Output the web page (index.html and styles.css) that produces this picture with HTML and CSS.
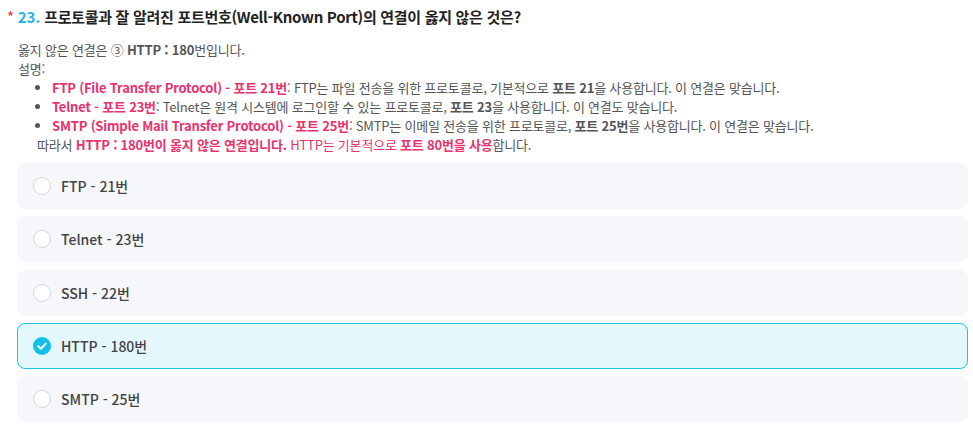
FILE: index.html
```html
<!DOCTYPE html>
<html lang="ko">
<head>
<meta charset="utf-8">
<link rel="stylesheet" href="styles.css">
</head>
<body>
<div class="page">
  <h2 class="title"><span class="req">*</span><span class="num">23.</span> 프로토콜과 잘 알려진 포트번호(Well-Known Port)의 연결이 옳지 않은 것은?</h2>
  <div class="explain">
    <p>옳지 않은 연결은 ③ <b>HTTP : 180</b>번입니다.</p>
    <p>설명:</p>
    <ul>
      <li><b class="pk">FTP (File Transfer Protocol) - 포트 21번</b>: FTP는 파일 전송을 위한 프로토콜로, 기본적으로 <b>포트 21</b>을 사용합니다. 이 연결은 맞습니다.</li>
      <li><b class="pk">Telnet - 포트 23번</b>: Telnet은 원격 시스템에 로그인할 수 있는 프로토콜로, <b>포트 23</b>을 사용합니다. 이 연결도 맞습니다.</li>
      <li><b class="pk">SMTP (Simple Mail Transfer Protocol) - 포트 25번</b>: SMTP는 이메일 전송을 위한 프로토콜로, <b>포트 25번</b>을 사용합니다. 이 연결은 맞습니다.</li>
    </ul>
    <p class="sum">따라서 <b class="pk">HTTP : 180번이 옳지 않은 연결입니다.</b><span class="pk"> HTTP는 기본적으로 </span><b class="pk">포트 80번을 사용</b>합니다.</p>
  </div>
  <div class="options">
    <div class="opt"><span class="radio"></span><span class="label">FTP - 21번</span></div>
    <div class="opt"><span class="radio"></span><span class="label">Telnet - 23번</span></div>
    <div class="opt"><span class="radio"></span><span class="label">SSH - 22번</span></div>
    <div class="opt sel"><span class="radio on"><svg width="18" height="18" viewBox="0 0 18 18"><circle cx="9" cy="9" r="9" fill="#12c0ea"/><path d="M5.2 9.2 L7.8 11.7 L12.8 6.6" fill="none" stroke="#fff" stroke-width="2" stroke-linecap="round" stroke-linejoin="round"/></svg></span><span class="label">HTTP - 180번</span></div>
    <div class="opt"><span class="radio"></span><span class="label">SMTP - 25번</span></div>
  </div>
</div>
</body>
</html>
```
FILE: styles.css
```css
* { box-sizing: border-box; }
html, body { margin: 0; padding: 0; background: #fff; }
body { font-family: "Noto Sans CJK KR", "Noto Sans", sans-serif; color: #555; }
.page { padding: 6px 5px 0 7px; }
.title { margin: 0; font-size: 15px; line-height: 22px; font-weight: 700; color: #222; letter-spacing: -0.3px; }
.req { color: #f0344a; margin-right: 4px; font-weight: 400; }
.num { color: #1cb4e6; letter-spacing: 0; }
.explain { padding: 12px 0 0 11px; font-size: 13px; line-height: 19px; color: #555; letter-spacing: -0.2px; }
.explain p { margin: 0; }
.explain b { font-weight: 600; }
.explain ul { margin: 0; padding: 0 0 0 34px; }
.explain li { margin: 0; }
.pk { color: #e8336f; }
.sum { padding-left: 19px; }
.options { padding: 9px 0 0 10px; display: flex; flex-direction: column; gap: 7.3px; }
.opt { height: 46px; background: #f6f7fb; border-radius: 8px; display: flex; align-items: center; padding-left: 15px; border: 1px solid transparent; }
.opt.sel { background: #e3f7fc; border-color: #1cc3e8; }
.radio { width: 18px; height: 18px; border-radius: 50%; border: 1px solid #d4d6da; background: #fff; flex: none; }
.radio.on { border: none; background: none; display: block; }
.radio svg { display: block; }
.label { margin-left: 10px; font-size: 14px; font-weight: 500; color: #444; }
```
